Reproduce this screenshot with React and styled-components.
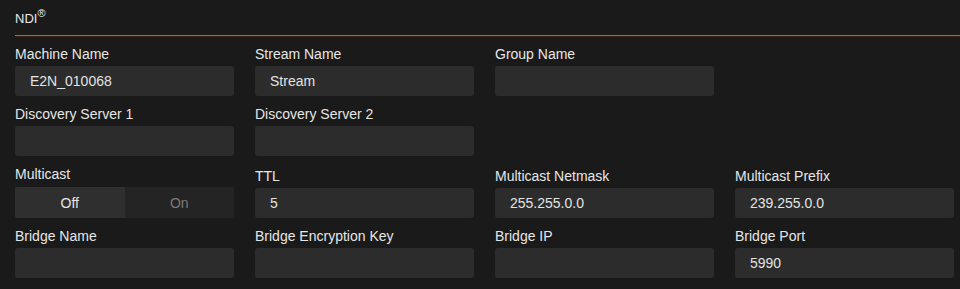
import React from "react";
import styled, { createGlobalStyle } from "styled-components";

const Global = createGlobalStyle`
  html, body { margin: 0; padding: 0; background: #1a1a1a; }
  body { font-family: "Liberation Sans", Arial, sans-serif; }
`;

const Page = styled.div`
  background: #1a1a1a;
  min-height: 289px;
  padding-left: 15px;
  box-sizing: border-box;
`;

const Header = styled.div`
  padding: 11px 0 8px;
  border-bottom: 1px solid #c25f2c;
  box-shadow: 0 1px 0 #3b1d10;
  color: #e8e8e8;
  font-size: 13px;
  line-height: 16px;
`;

const Sup = styled.sup`
  font-size: 11px;
  line-height: 0;
  position: relative;
  top: -1px;
`;

const Grid = styled.div`
  display: grid;
  grid-template-columns: repeat(4, 219px);
  column-gap: 21px;
  row-gap: 10px;
  align-items: end;
  padding-top: 10px;
`;

const Field = styled.div`
  display: flex;
  flex-direction: column;
  gap: ${(p) => (p.$toggle ? "4px" : "3px")};
  grid-column: ${(p) => p.$col || "auto"};
`;

const Label = styled.label`
  color: #e6e6e6;
  font-size: 14px;
  line-height: 17px;
`;

const Input = styled.input`
  box-sizing: border-box;
  width: 100%;
  height: 30px;
  border: none;
  outline: none;
  border-radius: 3px;
  background: #2c2c2c;
  color: #e2e2e2;
  font-family: "Liberation Sans", Arial, sans-serif;
  font-size: 14px;
  padding: 0 15px;
`;

const Toggle = styled.div`
  display: grid;
  grid-template-columns: 1fr 1fr;
  height: 31px;
  border-radius: 2px;
  overflow: hidden;
`;

const Seg = styled.div`
  display: flex;
  align-items: center;
  justify-content: center;
  font-size: 14px;
  background: ${(p) => (p.$active ? "#2f2f2f" : "#242424")};
  color: ${(p) => (p.$active ? "#e6e6e6" : "#7a7a7a")};
`;

const TextField = ({ label, value = "", col }) => (
  <Field $col={col}>
    <Label>{label}</Label>
    <Input defaultValue={value} />
  </Field>
);

export default function App() {
  return (
    <Page>
      <Global />
      <Header>
        NDI<Sup>®</Sup>
      </Header>
      <Grid>
        <TextField label="Machine Name" value="E2N_010068" />
        <TextField label="Stream Name" value="Stream" />
        <TextField label="Group Name" />
        <div />
        <TextField label="Discovery Server 1" col="1" />
        <TextField label="Discovery Server 2" />
        <Field $toggle $col="1">
          <Label>Multicast</Label>
          <Toggle>
            <Seg $active>Off</Seg>
            <Seg>On</Seg>
          </Toggle>
        </Field>
        <TextField label="TTL" value="5" />
        <TextField label="Multicast Netmask" value="255.255.0.0" />
        <TextField label="Multicast Prefix" value="239.255.0.0" />
        <TextField label="Bridge Name" />
        <TextField label="Bridge Encryption Key" />
        <TextField label="Bridge IP" />
        <TextField label="Bridge Port" value="5990" />
      </Grid>
    </Page>
  );
}
